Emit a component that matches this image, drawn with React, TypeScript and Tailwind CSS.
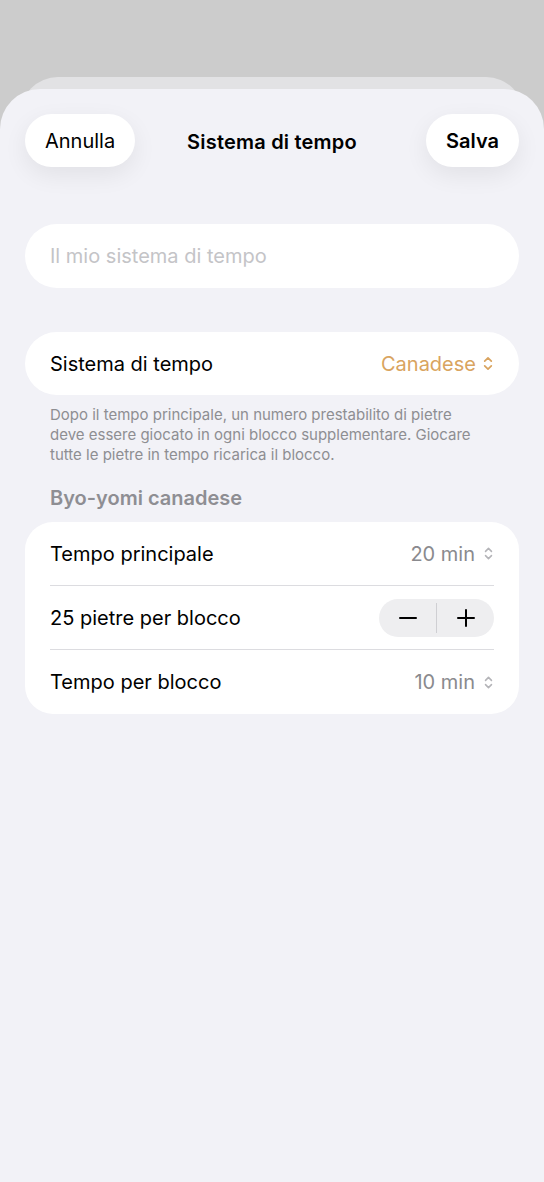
import React from 'react';

const font = { fontFamily: 'Inter, "Noto Sans", sans-serif' };

const UpDown = ({ className }: { className?: string }) => (
    <svg
        viewBox="0 0 12 20"
        className={className}
        fill="none"
        stroke="currentColor"
        strokeWidth={1.8}
        strokeLinecap="round"
        strokeLinejoin="round"
    >
        <path d="M2.5 7.5 6 4l3.5 3.5" />
        <path d="M2.5 12.5 6 16l3.5-3.5" />
    </svg>
);

const Row = ({
    label,
    children,
    last,
}: {
    label: string;
    children: React.ReactNode;
    last?: boolean;
}) => (
    <div className="px-[25px]">
        <div
            className={`flex h-[64px] items-center justify-between ${
                last ? '' : 'border-b border-[#dcdce0]'
            }`}
        >
            <span className="text-[20px] text-black">{label}</span>
            {children}
        </div>
    </div>
);

export default function App() {
    return (
        <div
            className="relative h-[1182px] w-full overflow-hidden bg-[#cccccc] pt-[89px]"
            style={font}
        >
            {/* Stacked sheet behind */}
            <div className="absolute left-[20px] right-[20px] top-[77px] h-[80px] rounded-t-[38px] bg-[#e2e2e4]" />

            <div className="relative h-full rounded-t-[40px] bg-[#f2f2f7]">
                {/* Header */}
                <div className="grid grid-cols-[1fr_auto_1fr] items-center px-[25px] pt-[25px]">
                    <div className="flex justify-start">
                        <button
                            type="button"
                            className="flex h-[53px] items-center rounded-full bg-white px-5 text-[20px] text-black shadow-[0_8px_24px_rgba(0,0,0,0.07)]"
                        >
                            Annulla
                        </button>
                    </div>
                    <h1 className="pt-[2px] text-[20px] font-semibold tracking-[0.2px] text-black">
                        Sistema di tempo
                    </h1>
                    <div className="flex justify-end">
                        <button
                            type="button"
                            className="flex h-[53px] items-center rounded-full bg-white px-5 text-[20px] font-semibold text-black shadow-[0_8px_24px_rgba(0,0,0,0.07)]"
                        >
                            Salva
                        </button>
                    </div>
                </div>

                <div className="px-[25px]">
                    {/* Name field */}
                    <div className="mt-[57px] flex h-[64px] items-center rounded-full bg-white px-[25px]">
                        <span className="text-[20px] text-[#c4c4c7]">
                            Il mio sistema di tempo
                        </span>
                    </div>

                    {/* System picker */}
                    <div className="mt-[44px] flex h-[63px] items-center justify-between rounded-full bg-white px-[25px]">
                        <span className="text-[20px] text-black">Sistema di tempo</span>
                        <span className="flex items-center gap-[6px] text-[20px] text-[#d9a460]">
                            Canadese
                            <UpDown className="h-[19px] w-[12px]" />
                        </span>
                    </div>
                    <p className="mt-[10px] px-[25px] text-[15px] leading-[20px] text-[#8e8e92]">
                        Dopo il tempo principale, un numero prestabilito di pietre
                        <br />
                        deve essere giocato in ogni blocco supplementare. Giocare
                        <br />
                        tutte le pietre in tempo ricarica il blocco.
                    </p>

                    {/* Section */}
                    <h2 className="mt-[18px] px-[25px] text-[20px] font-semibold text-[#8e8e93]">
                        Byo-yomi canadese
                    </h2>
                    <div className="mt-[9px] overflow-hidden rounded-[28px] bg-white">
                        <Row label="Tempo principale">
                            <span className="flex items-center gap-[8px] text-[20px] text-[#8a8a8e]">
                                20 min
                                <UpDown className="h-[17px] w-[11px] text-[#b4b4b8]" />
                            </span>
                        </Row>
                        <Row label="25 pietre per blocco">
                            <div className="flex h-[38px] w-[115px] items-center rounded-full bg-[#eeeef0]">
                                <button
                                    type="button"
                                    className="flex flex-1 items-center justify-center text-black"
                                >
                                    <svg viewBox="0 0 20 20" className="h-[20px] w-[20px]" stroke="currentColor" strokeWidth={2} strokeLinecap="round">
                                        <path d="M2 10h16" />
                                    </svg>
                                </button>
                                <div className="h-[30px] w-px bg-[#cfcfd3]" />
                                <button
                                    type="button"
                                    className="flex flex-1 items-center justify-center text-black"
                                >
                                    <svg viewBox="0 0 20 20" className="h-[20px] w-[20px]" stroke="currentColor" strokeWidth={2} strokeLinecap="round">
                                        <path d="M2 10h16M10 2v16" />
                                    </svg>
                                </button>
                            </div>
                        </Row>
                        <Row label="Tempo per blocco" last>
                            <span className="flex items-center gap-[8px] text-[20px] text-[#8a8a8e]">
                                10 min
                                <UpDown className="h-[17px] w-[11px] text-[#b4b4b8]" />
                            </span>
                        </Row>
                    </div>
                </div>
            </div>
        </div>
    );
}
